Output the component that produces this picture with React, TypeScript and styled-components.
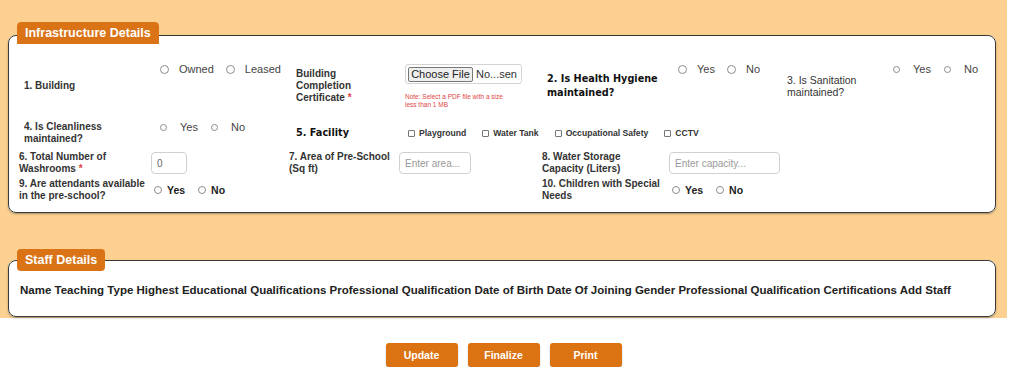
import React from "react";
import styled, { createGlobalStyle } from "styled-components";

const GlobalStyle = createGlobalStyle`
  body {
    margin: 0;
    background: #fff;
    font-family: "Liberation Sans", Arial, sans-serif;
    color: #333;
  }
`;

const Page = styled.div`
  width: 1007px;
`;

const Backdrop = styled.div`
  background: #fbd090;
  padding: 22px 11px 1px 8px;
  display: flex;
  flex-direction: column;
  gap: 36px;
`;

const Panel = styled.fieldset<{ $pad: string }>`
  margin: 0;
  min-width: 0;
  background: #fff;
  border: 1px solid #3a3a3a;
  border-radius: 8px;
  box-shadow: 0 1px 2px rgba(0, 0, 0, 0.35);
  padding: ${(p) => p.$pad};
`;

const Legend = styled.legend<{ $drop?: boolean }>`
  background: #d97316;
  color: #fff;
  font-weight: bold;
  font-size: 12.5px;
  height: 22px;
  line-height: 22px;
  padding: 0 8px;
  border-radius: 4px;
  box-sizing: content-box;
  ${(p) =>
    p.$drop &&
    `border-bottom: 4px solid transparent; background-clip: padding-box;`}
`;

const Body = styled.div`
  padding-left: 2px;
`;

const TopRow = styled.div<{ $cols: string; $h: number }>`
  display: grid;
  grid-template-columns: ${(p) => p.$cols};
  height: ${(p) => p.$h}px;
  align-items: start;
  margin-left: 5px;
`;

const LowerGrid = styled.div`
  display: grid;
  grid-template-columns: 132px 138px 110px 143px 127px 1fr;
  grid-template-rows: 28px 24px;
  align-items: start;
`;

const Cell = styled.div<{ $pt?: number; $ml?: number; $col?: number }>`
  padding-top: ${(p) => p.$pt ?? 0}px;
  margin-left: ${(p) => p.$ml ?? 0}px;
  ${(p) => (p.$col ? `grid-column: ${p.$col};` : "")}
`;

const FieldLabel = styled.div<{ $max?: number }>`
  font-size: 10px;
  line-height: 12px;
  font-weight: bold;
  color: #333;
  max-width: ${(p) => (p.$max ? `${p.$max}px` : "none")};
`;

const PlainLabel = styled.div`
  font-size: 10.5px;
  line-height: 12px;
  color: #333;
`;

const HeavyLabel = styled.div`
  font-family: "DejaVu Sans", Verdana, sans-serif;
  font-size: 9.7px;
  line-height: 14px;
  font-weight: bold;
  color: #111;
`;

const Req = styled.span`
  color: #e04545;
`;

const Options = styled.div`
  display: flex;
  align-items: center;
`;

const Option = styled.label<{ $space: number }>`
  display: flex;
  align-items: center;
  margin-right: ${(p) => p.$space}px;
`;

const Radio = styled.input<{ $size: number; $gap: number }>`
  appearance: none;
  width: ${(p) => p.$size}px;
  height: ${(p) => p.$size}px;
  border: 1px solid #8c8c8c;
  border-radius: 50%;
  margin: 0 ${(p) => p.$gap}px 0 0;
  box-sizing: border-box;
  background: #fff;
`;

const OptionText = styled.span<{ $bold?: boolean; $size: number }>`
  font-size: ${(p) => p.$size}px;
  line-height: 14px;
  font-weight: ${(p) => (p.$bold ? "bold" : "normal")};
  color: ${(p) => (p.$bold ? "#222" : "#444")};
`;

const Checks = styled.div`
  display: flex;
  align-items: center;
  gap: 16px;
`;

const Check = styled.label`
  display: flex;
  align-items: center;
  font-size: 8.6px;
  line-height: 12px;
  font-weight: bold;
  color: #333;
`;

const Box = styled.input`
  appearance: none;
  width: 7px;
  height: 7px;
  border: 1px solid #777;
  border-radius: 1px;
  margin: 0 4px 0 0;
  box-sizing: border-box;
`;

const FileBox = styled.div`
  width: 117px;
  height: 20px;
  box-sizing: border-box;
  border: 1px solid #d4d4d4;
  border-radius: 3px;
  display: flex;
  align-items: center;
  padding-left: 2px;
  gap: 3px;
  font-size: 11px;
  color: #333;
`;

const FileButton = styled.button`
  height: 15px;
  width: 65px;
  padding: 0;
  border: 1px solid #777;
  border-radius: 2px;
  background: #efefef;
  font-family: "Liberation Sans", Arial, sans-serif;
  font-size: 11px;
  color: #222;
`;

const Note = styled.div`
  margin-top: 9px;
  max-width: 106px;
  font-size: 6.5px;
  line-height: 7.5px;
  color: #e04545;
`;

const TextInput = styled.input<{ $w: number }>`
  width: ${(p) => p.$w}px;
  height: 22px;
  box-sizing: border-box;
  border: 1px solid #d0d0d0;
  border-radius: 4px;
  padding: 0 5px;
  font-family: "Liberation Sans", Arial, sans-serif;
  font-size: 10px;
  color: #666;
  &::placeholder {
    color: #999;
  }
`;

const StaffLine = styled.div`
  padding-left: 3px;
  font-size: 11.5px;
  line-height: 14px;
  font-weight: bold;
  color: #222;
  white-space: nowrap;
`;

const Actions = styled.div`
  display: flex;
  justify-content: center;
  gap: 10px;
  margin-top: 25px;
`;

const ActionButton = styled.button`
  width: 72px;
  height: 24px;
  border: none;
  border-radius: 3px;
  background: #dc7313;
  color: #fff;
  font-family: "Liberation Sans", Arial, sans-serif;
  font-size: 10.5px;
  font-weight: bold;
  box-shadow: 0 1px 2px rgba(0, 0, 0, 0.2);
`;

type RadioKind = "large" | "small" | "bold";

const radioSpec: Record<RadioKind, { size: number; gap: number; space: number; font: number; bold: boolean }> = {
  large: { size: 9, gap: 10, space: 12, font: 11, bold: false },
  small: { size: 7, gap: 13, space: 13, font: 11, bold: false },
  bold: { size: 8, gap: 5, space: 13, font: 10.5, bold: true },
};

function RadioGroup({ name, options, kind }: { name: string; options: string[]; kind: RadioKind }) {
  const s = radioSpec[kind];
  return (
    <Options>
      {options.map((o) => (
        <Option key={o} $space={s.space}>
          <Radio type="radio" name={name} $size={s.size} $gap={s.gap} />
          <OptionText $size={s.font} $bold={s.bold}>
            {o}
          </OptionText>
        </Option>
      ))}
    </Options>
  );
}

const facilities = ["Playground", "Water Tank", "Occupational Safety", "CCTV"];

const staffColumns = [
  "Name",
  "Teaching Type",
  "Highest Educational Qualifications",
  "Professional Qualification",
  "Date of Birth",
  "Date Of Joining",
  "Gender",
  "Professional Qualification Certifications",
  "Add",
  "Staff",
];

export default function App() {
  return (
    <Page>
      <GlobalStyle />
      <Backdrop>
        <Panel $pad="12px 11px 10px 8px">
          <Legend $drop>Infrastructure Details</Legend>
          <Body>
            <TopRow $cols="136px 136px 109px 142px 131px 109px 106px 1fr" $h={58}>
              <Cell $pt={20}>
                <FieldLabel>1. Building</FieldLabel>
              </Cell>
              <Cell $pt={2}>
                <RadioGroup name="building" options={["Owned", "Leased"]} kind="large" />
              </Cell>
              <Cell $pt={8}>
                <FieldLabel $max={80}>
                  Building Completion Certificate <Req>*</Req>
                </FieldLabel>
              </Cell>
              <Cell $pt={4}>
                <FileBox>
                  <FileButton type="button">Choose File</FileButton>
                  <span>No...sen</span>
                </FileBox>
                <Note>Note: Select a PDF file with a size less than 1 MB</Note>
              </Cell>
              <Cell $pt={12}>
                <HeavyLabel>2. Is Health Hygiene maintained?</HeavyLabel>
              </Cell>
              <Cell $pt={2}>
                <RadioGroup name="hygiene" options={["Yes", "No"]} kind="large" />
              </Cell>
              <Cell $pt={14}>
                <PlainLabel>3. Is Sanitation maintained?</PlainLabel>
              </Cell>
              <Cell $pt={2}>
                <RadioGroup name="sanitation" options={["Yes", "No"]} kind="small" />
              </Cell>
            </TopRow>

            <TopRow $cols="136px 136px 112px 1fr" $h={32}>
              <Cell $pt={3}>
                <FieldLabel>4. Is Cleanliness maintained?</FieldLabel>
              </Cell>
              <Cell $pt={2}>
                <RadioGroup name="clean" options={["Yes", "No"]} kind="small" />
              </Cell>
              <Cell $pt={8}>
                <HeavyLabel>5. Facility</HeavyLabel>
              </Cell>
              <Cell $pt={9}>
                <Checks>
                  {facilities.map((f) => (
                    <Check key={f}>
                      <Box type="checkbox" />
                      {f}
                    </Check>
                  ))}
                </Checks>
              </Cell>
            </TopRow>

            <LowerGrid>
              <Cell $pt={1}>
                <FieldLabel>
                  6. Total Number of Washrooms <Req>*</Req>
                </FieldLabel>
              </Cell>
              <Cell $pt={2}>
                <TextInput $w={36} defaultValue="0" />
              </Cell>
              <Cell $pt={1}>
                <FieldLabel>7. Area of Pre-School (Sq ft)</FieldLabel>
              </Cell>
              <Cell $pt={2}>
                <TextInput $w={72} placeholder="Enter area..." />
              </Cell>
              <Cell $pt={1}>
                <FieldLabel $max={119}>8. Water Storage Capacity (Liters)</FieldLabel>
              </Cell>
              <Cell $pt={2}>
                <TextInput $w={111} placeholder="Enter capacity..." />
              </Cell>

              <Cell>
                <FieldLabel>9. Are attendants available in the pre-school?</FieldLabel>
              </Cell>
              <Cell $pt={5} $ml={3}>
                <RadioGroup name="attendants" options={["Yes", "No"]} kind="bold" />
              </Cell>
              <Cell $col={5}>
                <FieldLabel $max={119}>10. Children with Special Needs</FieldLabel>
              </Cell>
              <Cell $pt={5} $ml={3}>
                <RadioGroup name="special" options={["Yes", "No"]} kind="bold" />
              </Cell>
            </LowerGrid>
          </Body>
        </Panel>

        <Panel $pad="12px 11px 19px 8px">
          <Legend>Staff Details</Legend>
          <StaffLine>{staffColumns.join(" ")}</StaffLine>
        </Panel>
      </Backdrop>

      <Actions>
        <ActionButton type="button">Update</ActionButton>
        <ActionButton type="button">Finalize</ActionButton>
        <ActionButton type="button">Print</ActionButton>
      </Actions>
    </Page>
  );
}
